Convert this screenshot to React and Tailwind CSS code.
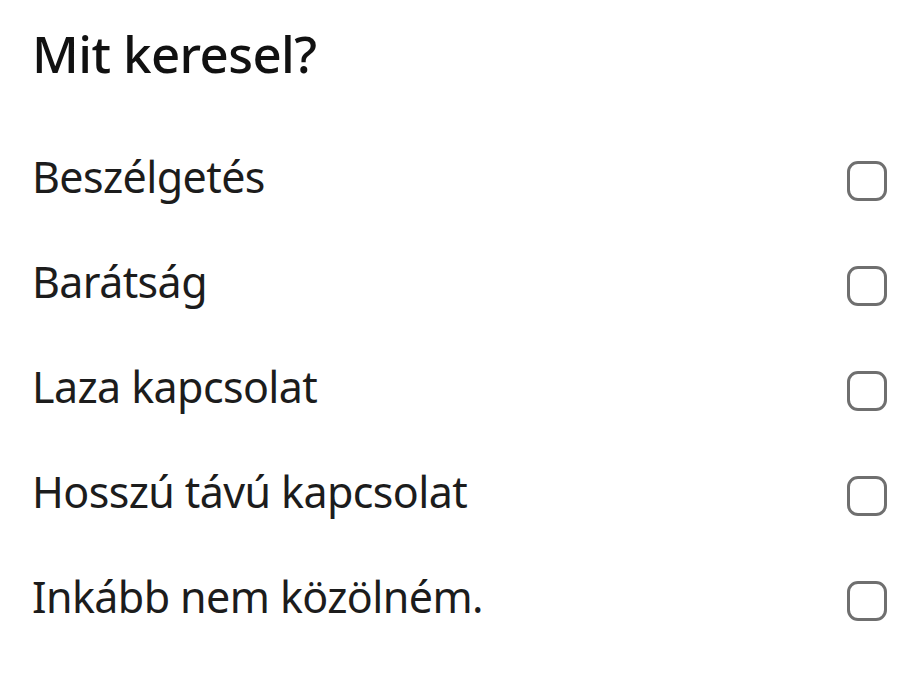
export default function App() {
  const items = ["Beszélgetés", "Barátság", "Laza kapcsolat", "Hosszú távú kapcsolat", "Inkább nem közölném."];
  return (
    <div className="w-[921px] h-[690px] bg-white text-[#1a1a1a]" style={{ fontFamily: '"Noto Sans", sans-serif' }}>
      <div className="pl-[32px] pr-[33px] pt-[23px]">
        <h1 className="text-[51px] leading-[60px] font-medium tracking-[-0.6px] text-[#111]">Mit keresel?</h1>
        <div className="mt-[45px] flex flex-col">
          {items.map((t) => (
            <div key={t} className="h-[105px] flex items-center justify-between">
              <span className="text-[43px] leading-none tracking-[-0.6px] text-[#1c1c1c] pb-[8px]">{t}</span>
              <span className="w-[40px] h-[40px] rounded-[11px] border-[3px] border-[#6f6f6f] mr-[1px]" />
            </div>
          ))}
        </div>
      </div>
    </div>
  );
}
